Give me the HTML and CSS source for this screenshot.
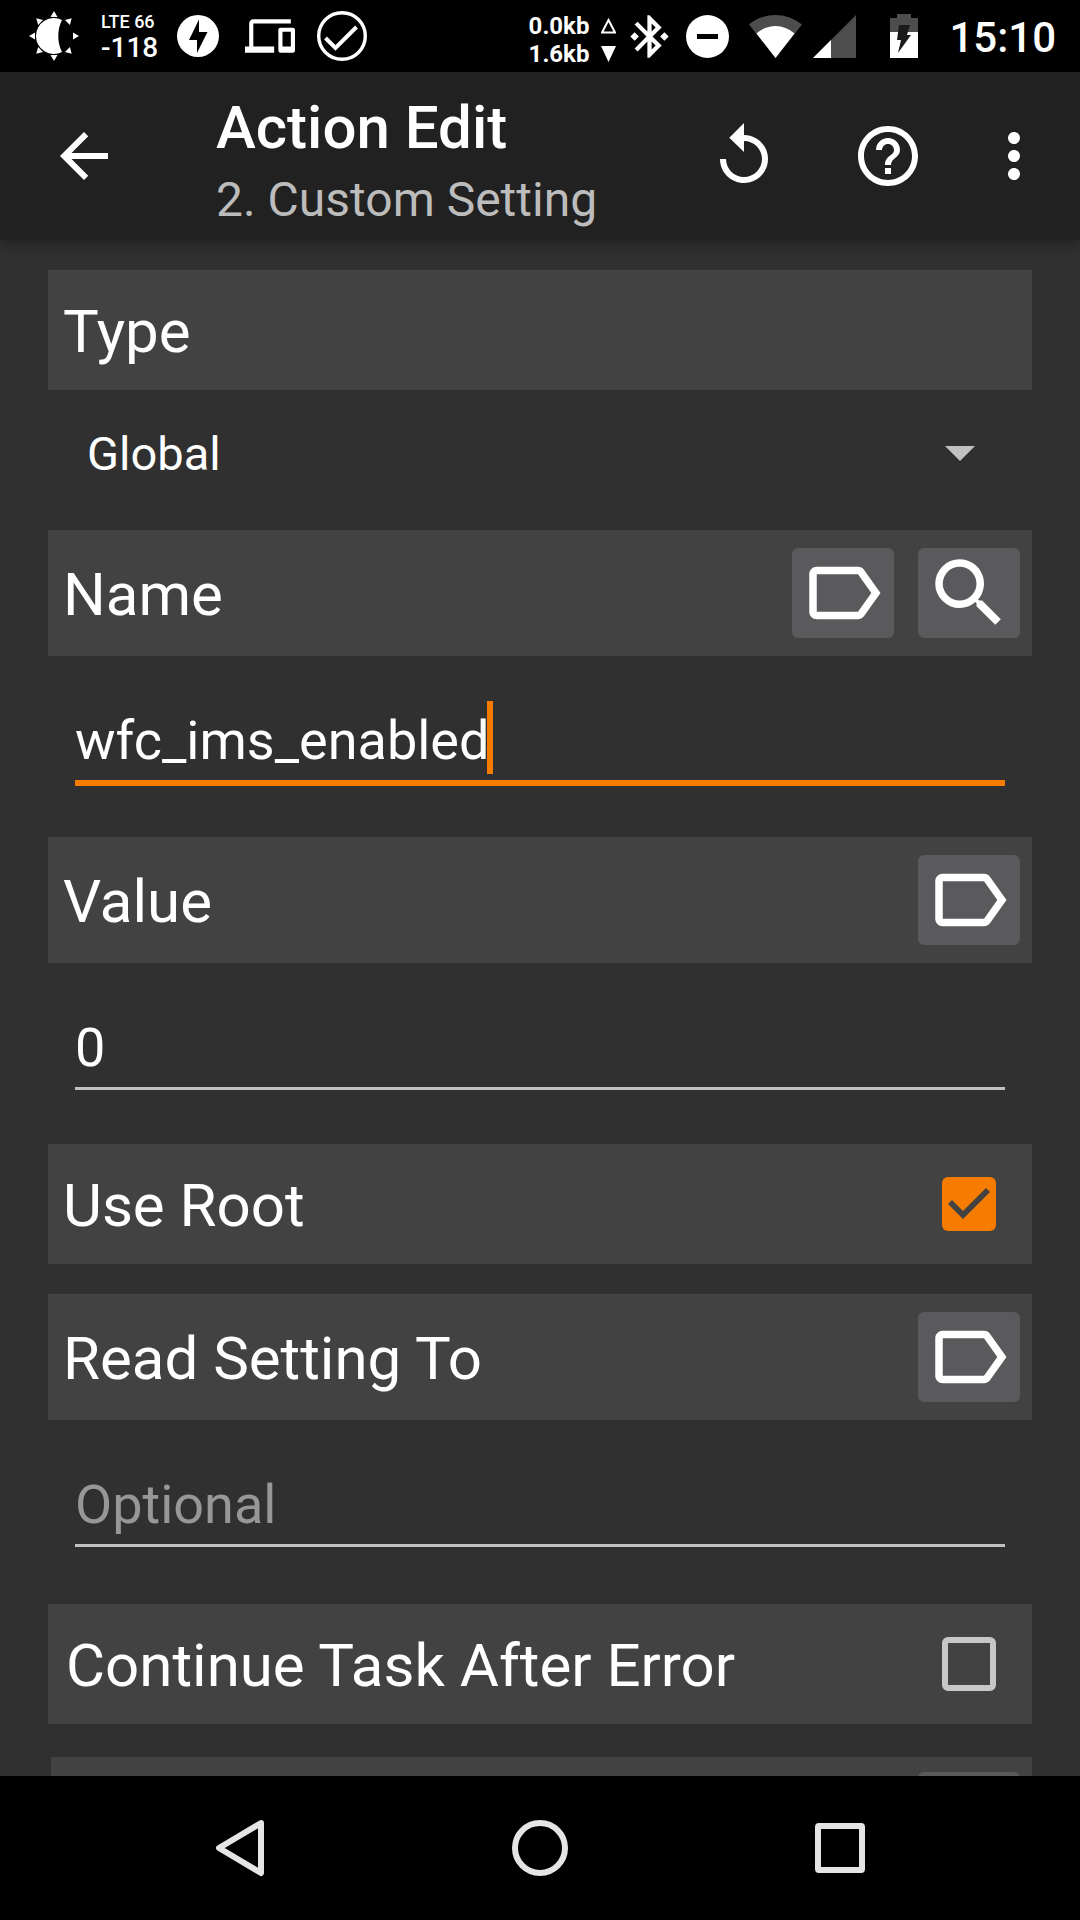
FILE: index.html
```html
<!DOCTYPE html>
<html lang="en">
<head>
    <meta charset="UTF-8">
    <meta name="viewport" content="width=device-width, initial-scale=1.0">
    <title>Action Edit</title>
    <link rel="stylesheet" href="styles.css">
</head>
<body>

    <!-- Shared icon shapes -->
    <svg class="sprite" aria-hidden="true">
        <symbol id="icon-tag" viewBox="0 0 24 24">
            <path d="M17.63 5.84C17.27 5.33 16.67 5 16 5L5 5.01C3.9 5.01 3 5.9 3 7v10c0 1.1.9 1.99 2 1.99L16 19c.67 0 1.27-.33 1.63-.84L22 12l-4.37-6.16zM16 17H5V7h11l3.55 5L16 17z"/>
        </symbol>
    </svg>

    <div class="status-bar">
        <div class="notifications">
            <svg width="50" height="50" viewBox="0 0 50 50">
                <path d="M33 8.9A18 18 0 1 0 33 41.1C28 31 28 19 33 8.9z"/>
                <path id="ray" d="M25 0l3.5 6h-7z"/>
                <use href="#ray" transform="rotate(45 25 25)"/>
                <use href="#ray" transform="rotate(90 25 25)"/>
                <use href="#ray" transform="rotate(135 25 25)"/>
                <use href="#ray" transform="rotate(180 25 25)"/>
                <use href="#ray" transform="rotate(225 25 25)"/>
                <use href="#ray" transform="rotate(270 25 25)"/>
                <use href="#ray" transform="rotate(315 25 25)"/>
            </svg>
            <div class="signal-text">
                <span class="network">LTE 66</span>
                <span class="level">-118</span>
            </div>
            <svg width="50" height="50" viewBox="0 0 50 50">
                <path fill-rule="evenodd" d="M25 4a21 21 0 1 0 0 42a21 21 0 1 0 0-42zM26 8.500v12.500h8.500L24 42V29h-8z"/>
            </svg>
            <svg width="50" height="50" viewBox="0 0 24 24">
                <path d="M4 6h18V4H4c-1.100 0-2 .9-2 2v11H0v3h14v-3H4V6zm19 2h-6c-.55 0-1 .45-1 1v10c0 .55.45 1 1 1h6c.55 0 1-.45 1-1V9c0-.55-.45-1-1-1zm-1 9h-4v-7h4v7z"/>
            </svg>
            <svg class="outline" width="50" height="50" viewBox="0 0 50 50">
                <circle cx="25" cy="25" r="23.300" stroke-width="3.400"/>
                <path d="M8.500 27L18.500 37L39.500 16" stroke-width="4"/>
            </svg>
        </div>

        <div class="system">
            <div class="traffic">
                <span>0.0kb</span>
                <svg width="15" height="16" viewBox="0 0 15 16"><path class="hollow" d="M7.500 2L14 14.500H1z"/></svg>
                <span>1.6kb</span>
                <svg width="15" height="16" viewBox="0 0 15 16"><path d="M0 0h15L7.500 16z"/></svg>
            </div>
            <svg class="bluetooth" width="51" height="51" viewBox="0 0 24 24">
                <path d="M7 12l-2-2-2 2 2 2 2-2zm10.710-4.290L12 2h-1v7.590L6.410 5 5 6.410 10.590 12 5 17.590 6.410 19 11 14.410V22h1l5.710-5.710-4.300-4.290 4.300-4.290zM13 5.830l1.880 1.880L13 9.590V5.830zm1.880 10.460L13 18.170v-3.760l1.880 1.880zM19 10l-2 2 2 2 2-2-2-2z"/>
            </svg>
            <svg class="dnd" width="43" height="43" viewBox="0 0 43 43">
                <path fill-rule="evenodd" d="M21.500 0a21.500 21.500 0 1 0 0 43a21.500 21.500 0 1 0 0-43zM11 19h21v5H11z"/>
            </svg>
            <svg class="wifi" width="53" height="43" viewBox="0 0 53 43">
                <path class="dim" d="M26.500 43L0 9.500Q12 0 26.500 0T53 9.500z"/>
                <path d="M26.500 43L7.500 18.500Q16 11 26.500 11T45.500 18.500z"/>
            </svg>
            <svg class="cell" width="43" height="43" viewBox="0 0 43 43">
                <path class="dim" d="M43 0v43H0z"/>
                <path d="M18 25v18H0z"/>
            </svg>
            <svg class="battery" width="28" height="44" viewBox="0 0 28 44">
                <path class="dim" d="M7 0h14v4h7v40H0V4h7z"/>
                <path d="M0 18h28v26H0z"/>
                <path class="bolt" d="M9 11h11l-3 10h4L8 39l3-13H7z"/>
            </svg>
            <span class="clock">15:10</span>
        </div>
    </div>

    <header class="app-bar">
        <button class="bar-btn back" aria-label="Back">
            <svg width="72" height="72" viewBox="0 0 24 24"><path d="M20 11H7.830l5.590-5.590L12 4l-8 8 8 8 1.410-1.410L7.830 13H20v-2z"/></svg>
        </button>
        <div class="titles">
            <h1>Action Edit</h1>
            <p>2. Custom Setting</p>
        </div>
        <button class="bar-btn" aria-label="Revert">
            <svg width="72" height="72" viewBox="0 0 24 24"><path d="M12 5V1L7.100 5.900 12 10.700V7c3.310 0 6 2.690 6 6s-2.690 6-6 6-6-2.690-6-6H4c0 4.420 3.580 8 8 8s8-3.580 8-8-3.580-8-8-8z"/></svg>
        </button>
        <button class="bar-btn" aria-label="Help">
            <svg width="72" height="72" viewBox="0 0 24 24"><path d="M11 18h2v-2h-2v2zm1-16C6.480 2 2 6.480 2 12s4.480 10 10 10 10-4.480 10-10S17.520 2 12 2zm0 18c-4.410 0-8-3.590-8-8s3.590-8 8-8 8 3.590 8 8-3.590 8-8 8zm0-14c-2.210 0-4 1.790-4 4h2c0-1.100.9-2 2-2s2 .9 2 2c0 2-3 1.750-3 5h2c0-2.250 3-2.500 3-5 0-2.210-1.790-4-4-4z"/></svg>
        </button>
        <button class="bar-btn more" aria-label="More options">
            <svg width="72" height="72" viewBox="0 0 24 24"><path d="M12 8c1.100 0 2-.9 2-2s-.9-2-2-2-2 .9-2 2 .9 2 2 2zm0 2c-1.100 0-2 .9-2 2s.9 2 2 2 2-.9 2-2-.9-2-2-2zm0 6c-1.100 0-2 .9-2 2s.9 2 2 2 2-.9 2-2-.9-2-2-2z"/></svg>
        </button>
    </header>

    <main class="settings">
        <div class="band">
            <label for="type">Type</label>
        </div>
        <div class="spinner">
            <select id="type">
                <option>Global</option>
                <option>Secure</option>
                <option>System</option>
            </select>
            <svg width="30" height="15" viewBox="0 0 30 15"><path d="M0 0h30L15 15z"/></svg>
        </div>

        <div class="band with-buttons">
            <label for="name">Name</label>
            <button class="tool-btn" aria-label="Pick variable for name"><svg width="90" height="90"><use href="#icon-tag"/></svg></button>
            <button class="tool-btn" aria-label="Search">
                <svg width="90" height="90" viewBox="0 0 24 24"><path fill-rule="evenodd" d="M9.500 3a6.500 6.500 0 1 0 0 13a6.500 6.500 0 0 0 4.230-1.570l.27.280v.79l5 4.990L20.490 19l-4.990-5h-.79l-.28-.27A6.500 6.500 0 0 0 9.500 3zM9.500 5a4.500 4.500 0 1 1 0 9a4.500 4.500 0 1 1 0-9z"/></svg>
            </button>
        </div>
        <div class="field active">
            <input type="text" id="name" value="wfc_ims_enabled" autocomplete="off" spellcheck="false">
            <span class="cursor"></span>
        </div>

        <div class="band with-buttons">
            <label for="value">Value</label>
            <button class="tool-btn" aria-label="Pick variable for value"><svg width="90" height="90"><use href="#icon-tag"/></svg></button>
        </div>
        <div class="field">
            <input type="text" id="value" value="0" autocomplete="off">
        </div>

        <div class="band">
            <label for="use-root">Use Root</label>
            <input type="checkbox" id="use-root" checked>
        </div>

        <div class="band with-buttons spaced">
            <label for="read-to">Read Setting To</label>
            <button class="tool-btn" aria-label="Pick variable to read to"><svg width="90" height="90"><use href="#icon-tag"/></svg></button>
        </div>
        <div class="field">
            <input type="text" id="read-to" placeholder="Optional" autocomplete="off">
        </div>

        <div class="band continue">
            <label for="continue">Continue Task After Error</label>
            <input type="checkbox" id="continue">
        </div>

        <!-- Next row, scrolled under the navigation bar -->
        <div class="band with-buttons condition">
            <button class="tool-btn" aria-label="Add condition"></button>
        </div>
    </main>

    <nav class="nav-bar">
        <button aria-label="Back">
            <svg width="60" height="60" viewBox="0 0 60 60"><path d="M51 5L9 30L51 55z"/></svg>
        </button>
        <button aria-label="Home">
            <svg width="60" height="60" viewBox="0 0 60 60"><circle cx="30" cy="30" r="25"/></svg>
        </button>
        <button aria-label="Recent apps">
            <svg width="60" height="60" viewBox="0 0 60 60"><rect x="8" y="8" width="44" height="44" rx="1"/></svg>
        </button>
    </nav>

</body>
</html>
```
FILE: styles.css
```css
* {
    box-sizing: border-box;
}
body {
    margin: 0;
    height: 100vh;
    display: flex;
    flex-direction: column;
    overflow: hidden;
    font-family: Roboto, sans-serif;
    background-color: #303030;
    color: #fff;
}
button {
    display: flex;
    align-items: center;
    justify-content: center;
    padding: 0;
    border: 0;
    background: none;
}
svg {
    display: block;
    flex-shrink: 0;
    fill: #fff;
}
.sprite {
    position: absolute;
    width: 0;
    height: 0;
}

/* Status bar */
.status-bar {
    display: flex;
    justify-content: space-between;
    flex-shrink: 0;
    height: 72px;
    padding: 0 24px 0 29px;
    background-color: #000;
}
.notifications, .system {
    display: flex;
    align-items: center;
}
.notifications {
    gap: 22px;
}
.outline {
    fill: none;
    stroke: #fff;
}
.signal-text {
    display: flex;
    flex-direction: column;
    width: 50px;
    font-weight: 500;
    white-space: nowrap;
}
.network {
    font-size: 18px;
    line-height: 24px;
}
.level {
    font-size: 28px;
    line-height: 28px;
}
.traffic {
    display: grid;
    grid-template-columns: auto auto;
    align-items: center;
    column-gap: 12px;
    margin-right: 8px;
    padding-top: 8px;
    font-size: 24px;
    font-weight: bold;
    line-height: 28px;
}
.hollow {
    fill: none;
    stroke: #fff;
    stroke-width: 2;
}
.dim {
    fill: #4d4d4d;
}
.bolt {
    fill: #1a1a1a;
}
.dnd {
    margin: 0 20px 0 11px;
}
.cell {
    margin: 0 34px 0 11px;
}
.clock {
    margin-left: 31px;
    padding-top: 2px;
    font-size: 42px;
    font-weight: 500;
}

/* App bar */
.app-bar {
    position: relative;
    display: flex;
    flex-shrink: 0;
    height: 168px;
    padding-right: 12px;
    background-color: #212121;
    box-shadow: 0 4px 12px rgba(0, 0, 0, 0.3);
}
.bar-btn {
    width: 144px;
}
.bar-btn.back {
    width: 168px;
}
.bar-btn.more {
    width: 108px;
}
.titles {
    flex: 1;
    padding: 20px 0 0 48px;
    line-height: 72px;
    white-space: nowrap;
}
.titles h1 {
    margin: 0;
    font-size: 60px;
    font-weight: 500;
}
.titles p {
    margin: 0;
    font-size: 48px;
    color: #bcbcbc;
}

/* Settings list */
.settings {
    flex: 1;
    min-height: 0;
    overflow: hidden;
    padding: 30px 48px 0;
}
.band {
    display: flex;
    align-items: center;
    height: 120px;
    padding-left: 15px;
    background-color: #424242;
}
.band label {
    flex: 1;
    padding-top: 3px;
    font-size: 60px;
}
.with-buttons {
    gap: 24px;
    height: 126px;
    padding-right: 12px;
}
.spaced {
    margin-top: 30px;
}
.continue {
    margin: 3px 0 33px;
    padding-left: 18px;
}
.condition {
    justify-content: flex-end;
    margin-left: 3px;
    height: 120px;
}
.tool-btn {
    width: 102px;
    height: 90px;
    border-radius: 6px;
    background-color: #5a5a5c;
}
.spinner {
    display: grid;
    align-items: center;
    height: 127px;
    margin-bottom: 13px;
}
.spinner select, .spinner svg {
    grid-area: 1 / 1;
}
.spinner select {
    appearance: none;
    height: 100%;
    padding: 0 39px;
    border: 0;
    background: none;
    color: #fff;
    font-family: inherit;
    font-size: 47px;
}
.spinner svg {
    justify-self: end;
    margin-right: 57px;
    fill: #c1c1c1;
    pointer-events: none;
}
.field {
    position: relative;
    padding: 44px 27px 57px;
}
.field input {
    display: block;
    width: 100%;
    height: 80px;
    padding: 0;
    border: 0;
    outline: 0;
    background: none;
    box-shadow: 0 3px #c1c1c1;
    color: #fff;
    font-family: inherit;
    font-size: 54px;
}
.field input::placeholder {
    color: #979797;
}
.field.active input {
    box-shadow: 0 6px #f57c00;
}
/* Text cursor at the end of the name */
.cursor {
    position: absolute;
    top: 45px;
    left: 439px;
    width: 6px;
    height: 73px;
    background-color: #f57c00;
}
.band input {
    appearance: none;
    width: 54px;
    height: 54px;
    margin: 0 36px 0 0;
    border: 6px solid #c7c7c7;
    border-radius: 6px;
}
.band input:checked {
    border: 0;
    background-color: #f57c00;
}
.band input:checked::after {
    content: "";
    display: block;
    height: 54px;
    background-color: #424242;
    clip-path: polygon(6px 27px, 10px 23px, 21px 34px, 44px 11px, 48px 15px, 21px 42px);
}

/* Navigation bar */
.nav-bar {
    display: flex;
    justify-content: center;
    flex-shrink: 0;
    height: 144px;
    background-color: #000;
}
.nav-bar button {
    width: 300px;
}
.nav-bar svg {
    fill: none;
    stroke: #e5e5e5;
    stroke-width: 6;
    stroke-linejoin: round;
}
```
